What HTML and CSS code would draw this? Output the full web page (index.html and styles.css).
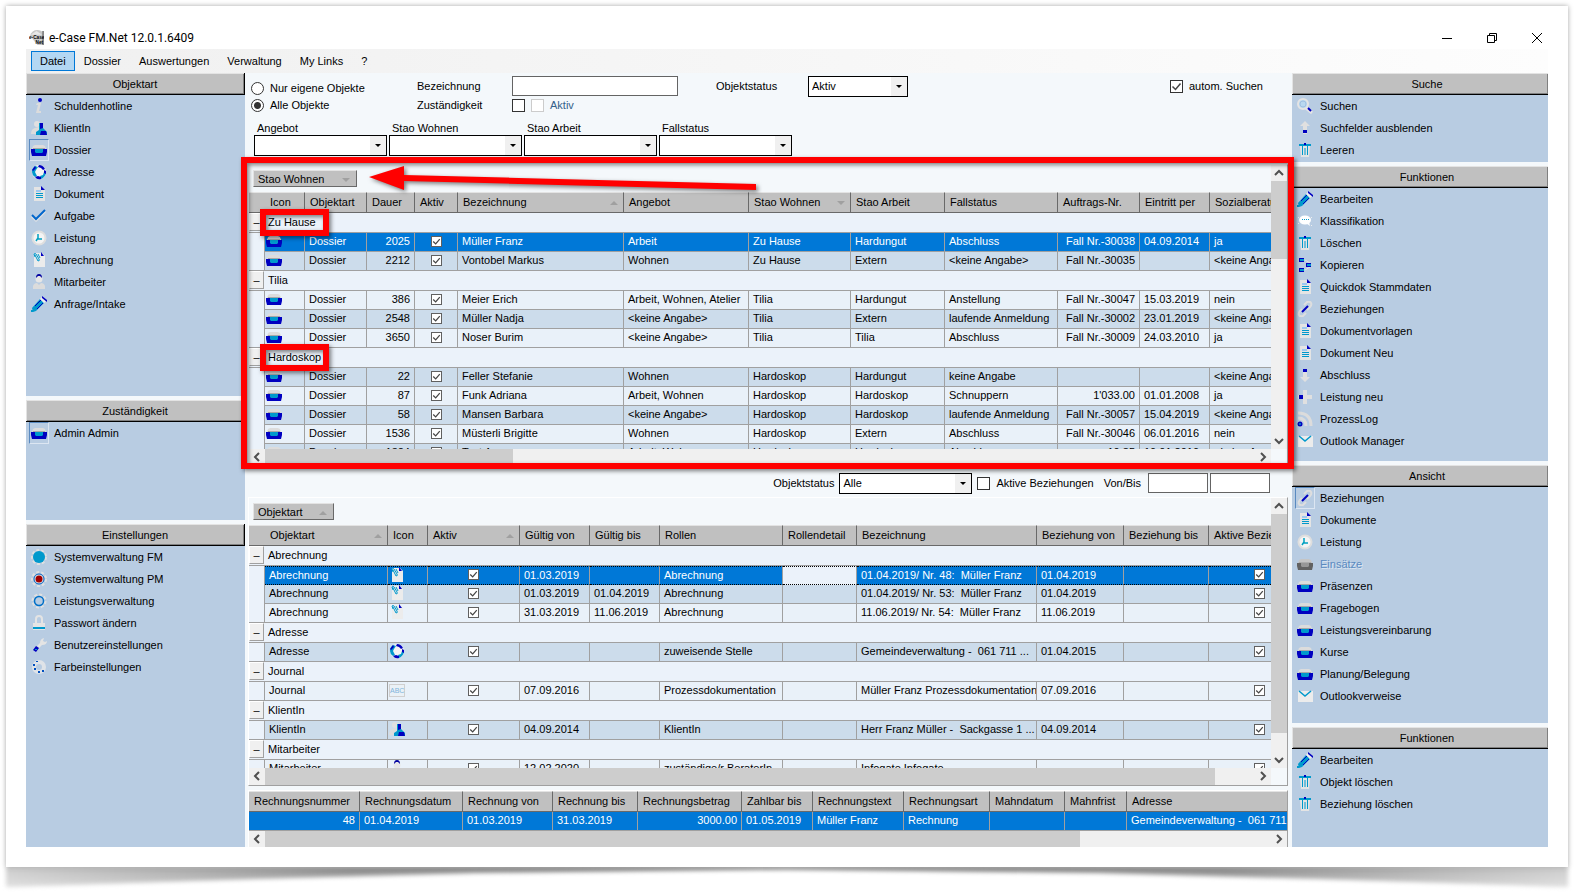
FILE: index.html
```html
<!DOCTYPE html>
<html lang="de">

<head>
	<meta charset="UTF-8">
	<meta name="viewport" content="width=device-width, initial-scale=1.0">
	<title>e-Case FM.Net 12.0.1.6409</title>
	<link rel="stylesheet" href="styles.css">
</head>

<body>

	<svg class="sprite" aria-hidden="true">
		<symbol id="i-info" viewBox="0 0 16 16"><circle cx="9" cy="2" r="2" fill="#0000c0"/><path d="M6 5h4l-2 8h2v2H5l2-8H5z" fill="#dcdcdc"/></symbol>
		<symbol id="i-client" viewBox="0 0 16 16"><circle cx="6" cy="4" r="3" fill="#e0e0e0"/><path d="M0 14q0-5 4-6l4-1v7z" fill="#dcdcdc"/><path d="M8 3h4v5l4 4v3H5v-3l3-2z" fill="#0099cc"/><path d="M9 3h3v5l-3 1zM10 11h5l1 4h-7z" fill="#0000c0"/></symbol>
		<symbol id="i-box" viewBox="0 0 16 16"><path d="M1 7l1-3 2-1h8l2 1 1 3z" fill="#dcdcdc"/><path d="M2 6h12v1H2z" fill="#a8a8a8"/><path d="M0 7h16v3l-1 4H1l-1-4z" fill="#0000c0"/><path d="M4 7h8v3l-1 1H5l-1-1z" fill="#0099cc"/></symbol>
		<symbol id="i-globe" viewBox="0 0 16 16"><circle cx="8" cy="8" r="7" fill="#f4f4f4"/><path d="M1 8q0-4 3-6l3 1-2 3-1 2 2 4-2 1q-3-2-3-5zM9 12l3-1 1-3 2 1q-1 4-5 6z" fill="#0099cc"/><path d="M8 1q4 0 6 4l-2 1-2-2-3-1zM13 6l2 1v3l-2-1zM4 13l3-1 3 1v2q-4 1-6-2zM1 6l3-4 1 2-3 3z" fill="#0000c0"/></symbol>
		<symbol id="i-doc" viewBox="0 0 16 16"><path d="M3 1h7l4 3v11H3z" fill="#e4e4e4"/><path d="M10 0l4 4h-4z" fill="#0000c0"/><path d="M5 4h5v2H5z" fill="#9cc8f0"/><path d="M5 7h7v1H5zM5 9h7v1H5zM5 11h7v1H5z" fill="#0099cc"/></symbol>
		<symbol id="i-check" viewBox="0 0 16 16"><path d="M1 8l4 4L14 3" fill="none" stroke="#e4e4e4" stroke-width="3"/><path d="M1 7l4 4L14 2" fill="none" stroke="#0066cc" stroke-width="2"/></symbol>
		<symbol id="i-clock" viewBox="0 0 16 16"><circle cx="8" cy="8" r="7.5" fill="#dedede"/><circle cx="8" cy="8" r="5.5" fill="#f4f4f4"/><path d="M7 4v5h4M7 8l-2 3" fill="none" stroke="#00a0c0" stroke-width="1.5"/></symbol>
		<symbol id="i-clip" viewBox="0 0 16 16"><path d="M3 1h8l3 3v11H3z" fill="#ececec"/><path d="M10 0l3 4h-3z" fill="#0000c0"/><path d="M4 3l3 6q2 0 1-2L5 2q-1-1-2 0l1 3M7 2l2 4" fill="none" stroke="#0099cc"/></symbol>
		<symbol id="i-staff" viewBox="0 0 16 16"><circle cx="8" cy="5" r="3.5" fill="#e6e6e6"/><path d="M5 4q0-4 3-4t3 4L9 2H7z" fill="#0000a0"/><path d="M2 15v-3q1-3 4-3l2 2 2-2q3 0 4 3v3z" fill="#dcdcdc"/></symbol>
		<symbol id="i-pencil" viewBox="0 0 16 16"><path d="M1 12l8-9 4 4-8 8-3 1z" fill="#0099cc"/><path d="M4 10l6-6M6 13l6-6" stroke="#0000c0" fill="none"/><path d="M9 3l2-2 4 4-2 2z" fill="#eee"/><path d="M11 0l5 4v2l-5-4z" fill="#0000c0"/><path d="M0 14h2v2H0z" fill="#0099cc"/></symbol>
		<symbol id="i-search" viewBox="0 0 16 16"><circle cx="6" cy="6" r="5" fill="#b8d8f0" stroke="#e4e4e4" stroke-width="2"/><circle cx="6" cy="6" r="3" fill="none" stroke="#a0c0e0"/><path d="M9 10l6 5" stroke="#e4e4e4" stroke-width="3"/><path d="M11 10l3 3" stroke="#0000c0" stroke-width="2"/></symbol>
		<symbol id="i-up" viewBox="0 0 16 16"><path d="M8 1l5 5h-3v8H6V6H3z" fill="#e0e0e0"/><path d="M6 10h4v3H6z" fill="#0000c0"/></symbol>
		<symbol id="i-down" viewBox="0 0 16 16"><path d="M8 15l5-5h-3V2H6v8H3z" fill="#e0e0e0"/><path d="M6 2h4v3H6z" fill="#0000c0"/></symbol>
		<symbol id="i-trash" viewBox="0 0 16 16"><path d="M3 4h10l-1 11H4z" fill="#e4e4e4"/><path d="M2 2h12v2H2z" fill="#0099cc"/><path d="M7 1h2v2H7z" fill="#0000c0"/><path d="M5.500 4v9M8 6v7M10.500 4v9" stroke="#0099cc" fill="none"/></symbol>
		<symbol id="i-chat" viewBox="0 0 16 16"><ellipse cx="8" cy="7" rx="6" ry="4.5" fill="#fff"/><path d="M9 10l4 3-1-4z" fill="#fff"/><path d="M5 6h1v1H5zM7 6h1v1H7zM9 6h1v1H9zM11 6h1v1h-1z" fill="#0099cc"/><path d="M1 4h1v1H1zM14 4h1v1h-1zM1 10h1v1H1zM14 12h1v1h-1z" fill="#eee"/></symbol>
		<symbol id="i-copy" viewBox="0 0 16 16"><path d="M8 3l5 3v4l-5 3" fill="none" stroke="#e0e0e0"/><path d="M2 1h5v4H2zM9 6h5v4H9zM2 11h5v4H2z" fill="#0000c0"/><path d="M3 2h4v2H3zM10 7h4v2h-4zM3 12h4v2H3z" fill="#0099cc"/></symbol>
		<symbol id="i-link" viewBox="0 0 16 16"><path d="M7 4l3-3q3-1 4 1t-1 4l-3 3M9 12l-3 3q-3 1-4-1t1-4l2-2" fill="none" stroke="#dedede" stroke-width="2"/><path d="M5 11l6-6" stroke="#0000c0" stroke-width="2"/></symbol>
		<symbol id="i-plus" viewBox="0 0 16 16"><path d="M6 1h4v5h5v4h-5v5H6v-5H1V6h5z" fill="#e0e0e0"/><path d="M2 6h4v4H2z" fill="#0000c0"/></symbol>
		<symbol id="i-rss" viewBox="0 0 16 16"><path d="M1 2q13 0 13 13M1 7q8 0 8 8" fill="none" stroke="#dcdcdc" stroke-width="3"/><circle cx="3" cy="13" r="2.500" fill="#0000c0"/><circle cx="3" cy="13" r="1" fill="#0099cc"/></symbol>
		<symbol id="i-mail" viewBox="0 0 16 16"><path d="M1 3h15v11H1z" fill="#ececec"/><path d="M2 3l6 5 6-5" fill="none" stroke="#0099cc" stroke-width="1.500"/></symbol>
		<symbol id="i-gear" viewBox="0 0 16 16"><circle cx="8" cy="8" r="7" fill="none" stroke="#e0e0e0" stroke-width="2" stroke-dasharray="3 2"/><circle cx="8" cy="8" r="6" fill="#0099cc"/></symbol>
		<symbol id="i-gear-red" viewBox="0 0 16 16"><circle cx="8" cy="8" r="7" fill="none" stroke="#e0e0e0" stroke-width="2" stroke-dasharray="3 2"/><circle cx="8" cy="8" r="5" fill="#e8e8e8" stroke="#0060c0"/><circle cx="8" cy="8" r="3.500" fill="#a00000"/></symbol>
		<symbol id="i-gear-ring" viewBox="0 0 16 16"><circle cx="8" cy="8" r="6.500" fill="none" stroke="#e0e0e0" stroke-width="2" stroke-dasharray="3 2"/><circle cx="8" cy="8" r="4.500" fill="#b8cce2" stroke="#0070c8" stroke-width="1.500"/></symbol>
		<symbol id="i-lock" viewBox="0 0 16 16"><path d="M5 8V4q0-3 3-3t3 3v4" fill="none" stroke="#e4e4e4" stroke-width="2"/><path d="M2 8h12v7H2z" fill="#e4e4e4"/><path d="M2 12h12v2H2z" fill="#0099cc"/></symbol>
		<symbol id="i-wrench" viewBox="0 0 16 16"><path d="M6 9l3-3q0-4 4-5l-1 3 2 1 2-1q0 4-5 4l-3 3z" fill="#e4e4e4"/><path d="M2 13l3-4 3 2-3 4z" fill="#0000c0"/><path d="M4 12h2v1H4z" fill="#0099cc"/></symbol>
		<symbol id="i-dots" viewBox="0 0 16 16"><circle cx="8" cy="8" r="7" fill="#dfe3e8"/><circle cx="8" cy="8" r="3" fill="#b8cce2"/><path d="M2 5h2v2H2zM3 9h2v2H3zM7 12h2v2H7zM11 11h2v2h-2zM5 2h2v1H5z" fill="#0050c0"/></symbol>
		<symbol id="i-left" viewBox="0 0 16 16"><path d="M10 4L6 8l4 4" fill="none" stroke="#505050" stroke-width="2"/></symbol>
		<symbol id="i-right" viewBox="0 0 16 16"><path d="M6 4l4 4-4 4" fill="none" stroke="#505050" stroke-width="2"/></symbol>
		<symbol id="i-top" viewBox="0 0 16 16"><path d="M4 10l4-4 4 4" fill="none" stroke="#505050" stroke-width="2"/></symbol>
		<symbol id="i-bottom" viewBox="0 0 16 16"><path d="M4 6l4 4 4-4" fill="none" stroke="#505050" stroke-width="2"/></symbol>
	</svg>

	<div class="sheet">
		<div class="shadow"></div>
		<div class="app">

			<header class="titlebar">
				<svg class="logo" viewBox="0 0 16 16" aria-hidden="true"><path d="M1 6q2-6 8-6 4 0 6 3v13H9" fill="#c8c8c8"/><path d="M2 5l6-4 6 4z" fill="#e8e8e8"/><path d="M14 1h2v15h-2z" fill="#888"/><text x="0" y="10" font-size="5" font-weight="bold" font-family="Liberation Sans, sans-serif">e-Case</text><text x="7" y="15" font-size="5" font-weight="bold" font-family="Liberation Sans, sans-serif">Net</text></svg>
				<h1>e-Case FM.Net 12.0.1.6409</h1>
				<div class="window-buttons">
					<button type="button" aria-label="Minimieren"><svg viewBox="0 0 12 12"><path d="M1 6.500h10"/></svg></button>
					<button type="button" aria-label="Wiederherstellen"><svg viewBox="0 0 12 12"><path d="M1.500 3.500h7v7h-7zM3.500 3.500v-2h7v7h-2"/></svg></button>
					<button type="button" aria-label="Schliessen"><svg viewBox="0 0 12 12"><path d="M1 1l10 10M11 1L1 11"/></svg></button>
				</div>
			</header>

			<nav class="menu">
				<button type="button" class="active">Datei</button>
				<button type="button">Dossier</button>
				<button type="button">Auswertungen</button>
				<button type="button">Verwaltung</button>
				<button type="button">My Links</button>
				<button type="button">?</button>
			</nav>

			<div class="columns">

				<aside class="sidebar left">
					<section class="panel tall">
						<h2>Objektart</h2>
						<button type="button"><svg><use href="#i-info"/></svg>Schuldenhotline</button>
						<button type="button"><svg><use href="#i-client"/></svg>KlientIn</button>
						<button type="button" class="pressed"><svg><use href="#i-box"/></svg>Dossier</button>
						<button type="button"><svg><use href="#i-globe"/></svg>Adresse</button>
						<button type="button"><svg><use href="#i-doc"/></svg>Dokument</button>
						<button type="button"><svg><use href="#i-check"/></svg>Aufgabe</button>
						<button type="button"><svg><use href="#i-clock"/></svg>Leistung</button>
						<button type="button"><svg><use href="#i-clip"/></svg>Abrechnung</button>
						<button type="button"><svg><use href="#i-staff"/></svg>Mitarbeiter</button>
						<button type="button"><svg><use href="#i-pencil"/></svg>Anfrage/Intake</button>
					</section>
					<section class="panel short">
						<h2>Zuständigkeit</h2>
						<button type="button" class="pressed"><svg><use href="#i-box"/></svg>Admin Admin</button>
					</section>
					<section class="panel tall">
						<h2>Einstellungen</h2>
						<button type="button"><svg><use href="#i-gear"/></svg>Systemverwaltung FM</button>
						<button type="button"><svg><use href="#i-gear-red"/></svg>Systemverwaltung PM</button>
						<button type="button"><svg><use href="#i-gear-ring"/></svg>Leistungsverwaltung</button>
						<button type="button"><svg><use href="#i-lock"/></svg>Passwort ändern</button>
						<button type="button"><svg><use href="#i-wrench"/></svg>Benutzereinstellungen</button>
						<button type="button"><svg><use href="#i-dots"/></svg>Farbeinstellungen</button>
					</section>
				</aside>

				<main class="main">

					<form class="filters">
						<div class="filter-grid">
							<label class="option low"><input type="radio" name="scope">Nur eigene Objekte</label>
							<label for="bezeichnung">Bezeichnung</label>
							<input type="text" id="bezeichnung" class="text">
							<label for="status">Objektstatus</label>
							<select id="status" class="status"><option>Aktiv</option></select>
							<label class="option"><input type="checkbox" checked>autom. Suchen</label>

							<label class="option"><input type="radio" name="scope" checked>Alle Objekte</label>
							<label for="zustaendig">Zuständigkeit</label>
							<div class="option">
								<input type="checkbox" id="zustaendig">
								<label class="option disabled"><input type="checkbox" disabled>Aktiv</label>
							</div>
						</div>
						<div class="dropdowns">
							<label>Angebot<select><option></option></select></label>
							<label>Stao Wohnen<select><option></option></select></label>
							<label>Stao Arbeit<select><option></option></select></label>
							<label>Fallstatus<select><option></option></select></label>
						</div>
					</form>

					<div class="grid-pane upper">
						<div class="viewport">
							<div class="group-bar"><button type="button" class="chip">Stao Wohnen<i class="sort desc"></i></button></div>
							<table class="dossiers">
								<colgroup>
									<col class="w16"><col class="w40"><col class="w62"><col class="w48"><col class="w43"><col class="w166"><col class="w125"><col class="w102"><col class="w94"><col class="w113"><col class="w82"><col class="w70"><col class="w90">
								</colgroup>
								<thead>
									<tr><th class="indent"></th><th>Icon</th><th>Objektart</th><th>Dauer</th><th>Aktiv</th><th>Bezeichnung<i class="sort asc"></i></th><th>Angebot</th><th>Stao Wohnen<i class="sort desc"></i></th><th>Stao Arbeit</th><th>Fallstatus</th><th>Auftrags-Nr.</th><th>Eintritt per</th><th>Sozialberatung</th></tr>
								</thead>
								<tbody>
									<tr class="group"><td colspan="13"><div><button type="button" aria-label="Gruppe schliessen">–</button><span class="marked">Zu Hause</span></div></td></tr>
									<tr class="selected"><td class="indent"></td><td class="icon"><svg><use href="#i-box"/></svg></td><td>Dossier</td><td class="num">2025</td><td class="tick"><input type="checkbox" aria-label="Aktiv" checked></td><td>Müller Franz</td><td>Arbeit</td><td>Zu Hause</td><td>Hardungut</td><td>Abschluss</td><td class="num">Fall Nr.-30038</td><td>04.09.2014</td><td>ja</td></tr>
									<tr class="alt"><td class="indent"></td><td class="icon"><svg><use href="#i-box"/></svg></td><td>Dossier</td><td class="num">2212</td><td class="tick"><input type="checkbox" aria-label="Aktiv" checked></td><td>Vontobel Markus</td><td>Wohnen</td><td>Zu Hause</td><td>Extern</td><td>&lt;keine Angabe&gt;</td><td class="num">Fall Nr.-30035</td><td></td><td>&lt;keine Angabe&gt;</td></tr>
								</tbody>
								<tbody>
									<tr class="group"><td colspan="13"><div><button type="button" aria-label="Gruppe schliessen">–</button><span>Tilia</span></div></td></tr>
									<tr><td class="indent"></td><td class="icon"><svg><use href="#i-box"/></svg></td><td>Dossier</td><td class="num">386</td><td class="tick"><input type="checkbox" aria-label="Aktiv" checked></td><td>Meier Erich</td><td>Arbeit, Wohnen, Atelier</td><td>Tilia</td><td>Hardungut</td><td>Anstellung</td><td class="num">Fall Nr.-30047</td><td>15.03.2019</td><td>nein</td></tr>
									<tr class="alt"><td class="indent"></td><td class="icon"><svg><use href="#i-box"/></svg></td><td>Dossier</td><td class="num">2548</td><td class="tick"><input type="checkbox" aria-label="Aktiv" checked></td><td>Müller Nadja</td><td>&lt;keine Angabe&gt;</td><td>Tilia</td><td>Extern</td><td>laufende Anmeldung</td><td class="num">Fall Nr.-30002</td><td>23.01.2019</td><td>&lt;keine Angabe&gt;</td></tr>
									<tr><td class="indent"></td><td class="icon"><svg><use href="#i-box"/></svg></td><td>Dossier</td><td class="num">3650</td><td class="tick"><input type="checkbox" aria-label="Aktiv" checked></td><td>Noser Burim</td><td>&lt;keine Angabe&gt;</td><td>Tilia</td><td>Tilia</td><td>Abschluss</td><td class="num">Fall Nr.-30009</td><td>24.03.2010</td><td>ja</td></tr>
								</tbody>
								<tbody>
									<tr class="group"><td colspan="13"><div><button type="button" aria-label="Gruppe schliessen">–</button><span class="marked">Hardoskop</span></div></td></tr>
									<tr class="alt"><td class="indent"></td><td class="icon"><svg><use href="#i-box"/></svg></td><td>Dossier</td><td class="num">22</td><td class="tick"><input type="checkbox" aria-label="Aktiv" checked></td><td>Feller Stefanie</td><td>Wohnen</td><td>Hardoskop</td><td>Hardungut</td><td>keine Angabe</td><td></td><td></td><td>&lt;keine Angabe&gt;</td></tr>
									<tr><td class="indent"></td><td class="icon"><svg><use href="#i-box"/></svg></td><td>Dossier</td><td class="num">87</td><td class="tick"><input type="checkbox" aria-label="Aktiv" checked></td><td>Funk Adriana</td><td>Arbeit, Wohnen</td><td>Hardoskop</td><td>Hardoskop</td><td>Schnuppern</td><td class="num">1'033.00</td><td>01.01.2008</td><td>ja</td></tr>
									<tr class="alt"><td class="indent"></td><td class="icon"><svg><use href="#i-box"/></svg></td><td>Dossier</td><td class="num">58</td><td class="tick"><input type="checkbox" aria-label="Aktiv" checked></td><td>Mansen Barbara</td><td>&lt;keine Angabe&gt;</td><td>Hardoskop</td><td>Hardoskop</td><td>laufende Anmeldung</td><td class="num">Fall Nr.-30057</td><td>15.04.2019</td><td>&lt;keine Angabe&gt;</td></tr>
									<tr><td class="indent"></td><td class="icon"><svg><use href="#i-box"/></svg></td><td>Dossier</td><td class="num">1536</td><td class="tick"><input type="checkbox" aria-label="Aktiv" checked></td><td>Müsterli Brigitte</td><td>Wohnen</td><td>Hardoskop</td><td>Extern</td><td>Abschluss</td><td class="num">Fall Nr.-30046</td><td>06.01.2016</td><td>nein</td></tr>
									<tr class="alt"><td class="indent"></td><td class="icon"><svg><use href="#i-box"/></svg></td><td>Dossier</td><td class="num">1324</td><td class="tick"><input type="checkbox" aria-label="Aktiv" checked></td><td>Test Anna</td><td>Arbeit, Wohnen</td><td>Hardoskop</td><td>Hardoskop</td><td>Abschluss</td><td class="num">10.85</td><td>10.01.2010</td><td>&lt;keine Angabe&gt;</td></tr>
								</tbody>
							</table>
						</div>
						<div class="vscroll"><svg><use href="#i-top"/></svg><div class="track"><div class="thumb" style="height: 31%"></div></div><svg><use href="#i-bottom"/></svg></div>
						<div class="hscroll"><svg><use href="#i-left"/></svg><div class="track"><div class="thumb" style="width: 25%"></div></div><svg><use href="#i-right"/></svg></div>
						<div class="highlight"></div>
						<svg class="arrow" viewBox="0 0 392 28" aria-hidden="true"><path d="M0 12L35 1v9l352 9v6L35 16v9z" fill="#f00"/></svg>
					</div>

					<form class="relation-filters">
						<label for="rel-status">Objektstatus</label>
						<select id="rel-status"><option>Alle</option></select>
						<label class="option"><input type="checkbox">Aktive Beziehungen</label>
						<label for="von" class="range">Von/Bis</label>
						<input type="text" id="von" class="date">
						<input type="text" class="date" aria-label="Bis">
					</form>

					<div class="grid-pane lower">
						<div class="viewport">
							<div class="group-bar"><button type="button" class="chip narrow">Objektart<i class="sort asc"></i></button></div>
							<table class="relations">
								<colgroup>
									<col class="w16"><col class="w123"><col class="w40"><col class="w92"><col class="w70"><col class="w70"><col class="w123"><col class="w74"><col class="w180"><col class="w87"><col class="w85"><col class="w102">
								</colgroup>
								<thead>
									<tr><th class="indent"></th><th>Objektart<i class="sort asc"></i></th><th>Icon</th><th>Aktiv<i class="sort asc"></i></th><th>Gültig von</th><th>Gültig bis</th><th>Rollen</th><th>Rollendetail</th><th>Bezeichnung</th><th>Beziehung von</th><th>Beziehung bis</th><th>Aktive Beziehung</th></tr>
								</thead>
								<tbody>
									<tr class="group"><td colspan="12"><div><button type="button" aria-label="Gruppe schliessen">–</button><span>Abrechnung</span></div></td></tr>
									<tr class="selected current"><td class="indent"></td><td>Abrechnung</td><td class="icon"><svg><use href="#i-clip"/></svg></td><td class="tick"><input type="checkbox" aria-label="Aktiv" checked></td><td>01.03.2019</td><td></td><td>Abrechnung</td><td class="cursor"></td><td>01.04.2019/ Nr. 48:&nbsp; Müller Franz</td><td>01.04.2019</td><td></td><td class="tick"><input type="checkbox" aria-label="Aktive Beziehung" checked></td></tr>
									<tr class="alt"><td class="indent"></td><td>Abrechnung</td><td class="icon"><svg><use href="#i-clip"/></svg></td><td class="tick"><input type="checkbox" aria-label="Aktiv" checked></td><td>01.03.2019</td><td>01.04.2019</td><td>Abrechnung</td><td></td><td>01.04.2019/ Nr. 53:&nbsp; Müller Franz</td><td>01.04.2019</td><td></td><td class="tick"><input type="checkbox" aria-label="Aktive Beziehung" checked></td></tr>
									<tr><td class="indent"></td><td>Abrechnung</td><td class="icon"><svg><use href="#i-clip"/></svg></td><td class="tick"><input type="checkbox" aria-label="Aktiv" checked></td><td>31.03.2019</td><td>11.06.2019</td><td>Abrechnung</td><td></td><td>11.06.2019/ Nr. 54:&nbsp; Müller Franz</td><td>11.06.2019</td><td></td><td class="tick"><input type="checkbox" aria-label="Aktive Beziehung" checked></td></tr>
								</tbody>
								<tbody>
									<tr class="group"><td colspan="12"><div><button type="button" aria-label="Gruppe schliessen">–</button><span>Adresse</span></div></td></tr>
									<tr class="alt"><td class="indent"></td><td>Adresse</td><td class="icon"><svg><use href="#i-globe"/></svg></td><td class="tick"><input type="checkbox" aria-label="Aktiv" checked></td><td></td><td></td><td>zuweisende Stelle</td><td></td><td>Gemeindeverwaltung -&nbsp; 061 711 ...</td><td>01.04.2015</td><td></td><td class="tick"><input type="checkbox" aria-label="Aktive Beziehung" checked></td></tr>
								</tbody>
								<tbody>
									<tr class="group"><td colspan="12"><div><button type="button" aria-label="Gruppe schliessen">–</button><span>Journal</span></div></td></tr>
									<tr><td class="indent"></td><td>Journal</td><td class="icon"><span class="abc">ABC</span></td><td class="tick"><input type="checkbox" aria-label="Aktiv" checked></td><td>07.09.2016</td><td></td><td>Prozessdokumentation</td><td></td><td>Müller Franz Prozessdokumentation</td><td>07.09.2016</td><td></td><td class="tick"><input type="checkbox" aria-label="Aktive Beziehung" checked></td></tr>
								</tbody>
								<tbody>
									<tr class="group"><td colspan="12"><div><button type="button" aria-label="Gruppe schliessen">–</button><span>KlientIn</span></div></td></tr>
									<tr class="alt"><td class="indent"></td><td>KlientIn</td><td class="icon"><svg><use href="#i-client"/></svg></td><td class="tick"><input type="checkbox" aria-label="Aktiv" checked></td><td>04.09.2014</td><td></td><td>KlientIn</td><td></td><td>Herr Franz Müller -&nbsp; Sackgasse 1 ...</td><td>04.09.2014</td><td></td><td class="tick"><input type="checkbox" aria-label="Aktive Beziehung" checked></td></tr>
								</tbody>
								<tbody>
									<tr class="group"><td colspan="12"><div><button type="button" aria-label="Gruppe schliessen">–</button><span>Mitarbeiter</span></div></td></tr>
									<tr><td class="indent"></td><td>Mitarbeiter</td><td class="icon"><svg><use href="#i-staff"/></svg></td><td class="tick"><input type="checkbox" aria-label="Aktiv" checked></td><td>12.02.2020</td><td></td><td>zuständige/r BeraterIn</td><td></td><td>Infogate Infogate</td><td></td><td></td><td class="tick"><input type="checkbox" aria-label="Aktive Beziehung" checked></td></tr>
								</tbody>
							</table>
						</div>
						<div class="vscroll"><svg><use href="#i-top"/></svg><div class="track"><div class="thumb" style="height: 92%"></div></div><svg><use href="#i-bottom"/></svg></div>
						<div class="hscroll"><svg><use href="#i-left"/></svg><div class="track"><div class="thumb" style="width: 96%"></div></div><svg><use href="#i-right"/></svg></div>
					</div>

					<div class="grid-pane invoices">
						<div class="viewport">
							<table>
								<colgroup>
									<col class="w111"><col class="w103"><col class="w90"><col class="w85"><col class="w104"><col class="w71"><col class="w91"><col class="w86"><col class="w75"><col class="w62"><col class="w180">
								</colgroup>
								<thead>
									<tr><th>Rechnungsnummer</th><th>Rechnungsdatum</th><th>Rechnung von</th><th>Rechnung bis</th><th>Rechnungsbetrag</th><th>Zahlbar bis</th><th>Rechnungstext</th><th>Rechnungsart</th><th>Mahndatum</th><th>Mahnfrist</th><th>Adresse</th></tr>
								</thead>
								<tbody>
									<tr class="selected"><td class="num">48</td><td>01.04.2019</td><td>01.03.2019</td><td>31.03.2019</td><td class="num">3000.00</td><td>01.05.2019</td><td>Müller Franz</td><td>Rechnung</td><td></td><td></td><td>Gemeindeverwaltung -&nbsp; 061 711 77</td></tr>
								</tbody>
							</table>
						</div>
						<div class="hscroll"><svg><use href="#i-left"/></svg><div class="track"><div class="thumb" style="width: 81%"></div></div><svg><use href="#i-right"/></svg></div>
					</div>

				</main>

				<aside class="sidebar right">
					<section class="panel search">
						<h2>Suche</h2>
						<button type="button"><svg><use href="#i-search"/></svg>Suchen</button>
						<button type="button"><svg><use href="#i-up"/></svg>Suchfelder ausblenden</button>
						<button type="button"><svg><use href="#i-trash"/></svg>Leeren</button>
					</section>
					<section class="panel functions">
						<h2>Funktionen</h2>
						<button type="button"><svg><use href="#i-pencil"/></svg>Bearbeiten</button>
						<button type="button"><svg><use href="#i-chat"/></svg>Klassifikation</button>
						<button type="button"><svg><use href="#i-trash"/></svg>Löschen</button>
						<button type="button"><svg><use href="#i-copy"/></svg>Kopieren</button>
						<button type="button"><svg><use href="#i-doc"/></svg>Quickdok Stammdaten</button>
						<button type="button"><svg><use href="#i-link"/></svg>Beziehungen</button>
						<button type="button"><svg><use href="#i-doc"/></svg>Dokumentvorlagen</button>
						<button type="button"><svg><use href="#i-doc"/></svg>Dokument Neu</button>
						<button type="button"><svg><use href="#i-down"/></svg>Abschluss</button>
						<button type="button"><svg><use href="#i-plus"/></svg>Leistung neu</button>
						<button type="button"><svg><use href="#i-rss"/></svg>ProzessLog</button>
						<button type="button"><svg><use href="#i-mail"/></svg>Outlook Manager</button>
					</section>
					<section class="panel views">
						<h2>Ansicht</h2>
						<button type="button" class="pressed"><svg><use href="#i-link"/></svg>Beziehungen</button>
						<button type="button"><svg><use href="#i-doc"/></svg>Dokumente</button>
						<button type="button"><svg><use href="#i-clock"/></svg>Leistung</button>
						<button type="button" disabled><svg><use href="#i-box"/></svg>Einsätze</button>
						<button type="button"><svg><use href="#i-box"/></svg>Präsenzen</button>
						<button type="button"><svg><use href="#i-box"/></svg>Fragebogen</button>
						<button type="button"><svg><use href="#i-box"/></svg>Leistungsvereinbarung</button>
						<button type="button"><svg><use href="#i-box"/></svg>Kurse</button>
						<button type="button"><svg><use href="#i-box"/></svg>Planung/Belegung</button>
						<button type="button"><svg><use href="#i-mail"/></svg>Outlookverweise</button>
					</section>
					<section class="panel rest">
						<h2>Funktionen</h2>
						<button type="button"><svg><use href="#i-pencil"/></svg>Bearbeiten</button>
						<button type="button"><svg><use href="#i-trash"/></svg>Objekt löschen</button>
						<button type="button"><svg><use href="#i-trash"/></svg>Beziehung löschen</button>
					</section>
				</aside>

			</div>
		</div>
	</div>

</body>

</html>
```

FILE: styles.css
```css
*,
*::before,
*::after {
	box-sizing: border-box;
}

body {
	margin: 0;
	padding: 6px 14px 29px 6px;
	height: 100vh;
	background-color: white;
	color: black;
	font-family: "Liberation Sans", Arial, sans-serif;
	font-size: 11px;
	line-height: 16px;
}

button,
input,
select {
	margin: 0;
	padding: 0;
	font: inherit;
	color: inherit;
}

h1,
h2 {
	margin: 0;
	font-size: inherit;
	font-weight: normal;
}

.sprite {
	position: absolute;
	width: 0;
	height: 0;
}

/* sheet of paper with curled shadow */

.sheet {
	position: relative;
	height: 100%;
	padding: 20px;
	background-color: white;
	box-shadow: 0 0 5px rgba(0, 0, 0, 0.35);
}

.shadow {
	position: absolute;
	z-index: -1;
	top: 100%;
	left: 0;
	right: 0;
	height: 20px;
	filter: blur(2px);
}

.shadow::before {
	content: "";
	display: block;
	height: 100%;
	background: linear-gradient(to bottom, transparent, rgba(255, 255, 255, 0.4)), linear-gradient(to right, #ccc, #888 22%, #777 50%, #888 78%, #ccc);
	clip-path: polygon(0 0, 100% 0, 100% 100%, 84% 60%, 70% 30%, 50% 12%, 30% 30%, 16% 60%, 0 100%);
}

.app {
	display: flex;
	flex-direction: column;
	height: 100%;
}

/* title bar and menu */

.titlebar {
	display: flex;
	align-items: center;
	gap: 5px;
	height: 23px;
	padding: 0 5px 0 3px;
	font-family: Roboto, sans-serif;
	font-size: 12px;
}

.logo {
	width: 15px;
	height: 15px;
}

.window-buttons {
	display: flex;
	gap: 33px;
	margin-left: auto;
}

.window-buttons button {
	width: 12px;
	height: 16px;
	border: 0;
	background: none;
}

.window-buttons svg {
	display: block;
	width: 12px;
	height: 12px;
	fill: none;
	stroke: black;
}

.menu {
	display: flex;
	height: 24px;
	padding: 2px 5px;
	background: linear-gradient(to right, #f0f0f0, #fdfdfd);
}

.menu button {
	padding: 0 8px;
	border: 1px solid transparent;
	background: none;
}

.menu .active {
	border-color: #0078d7;
	background-color: #b3d7f3;
}

.columns {
	flex: 1;
	display: flex;
	min-height: 0;
	background-color: #f4f8fb;
}

/* side panels */

.sidebar {
	display: flex;
	flex-direction: column;
	gap: 4px;
	flex: none;
}

.left {
	width: 219px;
}

.right {
	width: 256px;
}

.panel {
	display: flex;
	flex-direction: column;
	background-color: #b8cce2;
	overflow: hidden;
}

.tall {
	flex: 27 1 0;
}

.short {
	flex: 10 1 0;
}

.search {
	flex: none;
	padding-bottom: 1px;
}

.functions {
	flex: none;
	padding-bottom: 9px;
}

.views {
	flex: none;
	padding-bottom: 16px;
}

.rest {
	flex: 1;
}

.panel h2 {
	flex: none;
	height: 22px;
	line-height: 22px;
	text-align: center;
	background-color: #c0c0c0;
	border-bottom: 1px solid black;
	box-shadow: inset 1px 1px #e3e3e3, inset -1px -1px #808080;
}

.left h2 {
	border-right: 1px solid black;
}

.right h2 {
	padding-left: 14px;
}

.panel button {
	display: flex;
	align-items: center;
	gap: 5px;
	flex: none;
	height: 22px;
	padding: 0 3px;
	border: 0;
	background: none;
	line-height: 14px;
	text-align: left;
}

.panel svg {
	width: 20px;
	height: 22px;
	padding: 3px 2px;
}

.panel .pressed svg {
	border: 1px solid;
	border-color: #5a8ac0 #dce6f2 #dce6f2 #5a8ac0;
	padding: 2px 1px;
}

.panel button:disabled {
	color: #5a8ac0;
	text-shadow: 1px 1px #dce6f2;
}

.panel button:disabled svg {
	filter: grayscale(1) contrast(0.4) brightness(1.2);
}

/* filters */

.main {
	flex: 1;
	display: flex;
	flex-direction: column;
	min-width: 0;
	padding: 0 4px 0 3px;
}

.filters {
	flex: none;
	padding: 3px 0 8px 3px;
}

.filter-grid {
	display: grid;
	grid-template-columns: 166px 95px 204px 92px 1fr 118px;
	grid-template-rows: 20px 16px;
	row-gap: 1px;
	align-items: center;
}

.option {
	display: flex;
	align-items: center;
	gap: 6px;
}

.low {
	align-self: end;
}

.disabled {
	color: #33618a;
}

input[type="checkbox"],
input[type="radio"] {
	appearance: none;
	flex: none;
	width: 13px;
	height: 13px;
	border: 1px solid #333;
	background-color: white;
}

input[type="radio"] {
	border-radius: 50%;
}

input[type="radio"]:checked {
	background-image: radial-gradient(circle, #333 3px, transparent 4px);
}

input[type="checkbox"]:checked {
	background-image: url("data:image/svg+xml,%3Csvg xmlns='http://www.w3.org/2000/svg' viewBox='0 0 11 11'%3E%3Cpath d='M1.500 5.500l3 3 5-6' fill='none' stroke='%23444' stroke-width='1.500'/%3E%3C/svg%3E");
}

input[type="checkbox"]:disabled {
	border-color: #ccc;
}

.text,
.date {
	width: 166px;
	height: 20px;
	border: 1px solid #646464;
	background-color: white;
}

.date {
	width: 60px;
}

select {
	appearance: none;
	width: 133px;
	height: 21px;
	padding-left: 3px;
	border: 1px solid black;
	border-radius: 0;
	background: url("data:image/svg+xml,%3Csvg xmlns='http://www.w3.org/2000/svg' width='16' height='19'%3E%3Cpath d='M0 0h16v19H0z' fill='%23f0f0f0'/%3E%3Cpath d='M5 8h6l-3 3z'/%3E%3C/svg%3E") right center no-repeat white;
}

.status {
	width: 100px;
}

.dropdowns {
	display: flex;
	gap: 2px;
	margin-top: 9px;
	padding-left: 3px;
}

.dropdowns label {
	display: flex;
	flex-direction: column;
	line-height: 13px;
	text-indent: 3px;
}

/* data grids */

.grid-pane {
	position: relative;
	display: grid;
	grid-template: minmax(0, 1fr) 17px / minmax(0, 1fr) 16px;
	min-height: 0;
	border: 1px solid;
	border-color: white #a0a0a0 #a0a0a0 white;
}

.upper {
	flex: 303 1 0;
}

.lower {
	flex: 288 1 0;
}

.invoices {
	flex: none;
	grid-template: auto 16px / minmax(0, 1fr);
	margin-top: 4px;
	border-bottom: 0;
}

.viewport {
	overflow: hidden;
}

.group-bar {
	height: 27px;
	padding: 5px 4px;
}

.chip {
	display: flex;
	align-items: center;
	width: 104px;
	height: 17px;
	padding: 0 6px 0 4px;
	border: 1px solid;
	border-color: #e3e3e3 #696969 #696969 #e3e3e3;
	background-color: #c0c0c0;
}

.narrow {
	width: 81px;
}

.sort {
	float: right;
	margin: 8px 5px 0 0;
	border: 4px solid transparent;
}

.asc {
	border-top: 0;
	border-bottom-color: #a0a0a0;
}

.desc {
	border-bottom: 0;
	border-top-color: #a0a0a0;
}

.chip .sort {
	float: none;
	margin: 2px 0 0 auto;
}

table {
	width: 1px;
	table-layout: fixed;
	border-collapse: separate;
	border-spacing: 0;
	white-space: nowrap;
}

th {
	height: 21px;
	padding: 0 0 0 5px;
	font-weight: normal;
	text-align: left;
	line-height: 19px;
	overflow: hidden;
	background-color: #c0c0c0;
	border: 1px solid;
	border-color: #e3e3e3 #696969 #696969 #e3e3e3;
	border-left: 0;
}

td {
	height: 19px;
	padding: 0 4px;
	line-height: 16px;
	overflow: hidden;
	background-color: #e9f1f9;
	border-right: 1px solid #a0a0a0;
	border-bottom: 1px solid #a0a0a0;
	vertical-align: top;
}

th.indent {
	border-right: 0;
}

.alt td {
	background-color: #ccdceb;
}

.selected td {
	color: white;
	background-color: #0078d7;
}

.current td {
	border-top: 1px dotted black;
	border-bottom: 1px dotted black;
}

.selected .cursor {
	background-color: #ebf2fa;
}

tr td.indent {
	border-top: 0;
	border-bottom: 0;
	background-color: #ebf2fa;
}

tr:last-child td.indent {
	border-bottom: 1px solid #a0a0a0;
}

.num {
	text-align: right;
}

.icon {
	padding: 0 1px;
}

.icon svg {
	display: block;
	width: 16px;
	height: 16px;
}

.abc {
	display: block;
	width: 16px;
	height: 13px;
	margin-top: 2px;
	border: 1px solid #d0d0d0;
	background-color: #eaf1f6;
	color: #7fb4dc;
	font-size: 7px;
	line-height: 11px;
	text-align: center;
}

.tick {
	padding-top: 3px;
}

.current .tick {
	padding-top: 2px;
}

td input[type="checkbox"] {
	display: block;
	width: 11px;
	height: 11px;
	margin: 0 auto;
	border-color: #606060;
}

.group td {
	height: 20px;
	padding: 0;
	overflow: visible;
	background-color: #ebf2fa;
}

.group div {
	display: flex;
	gap: 2px;
	height: 19px;
}

.group button {
	width: 15px;
	height: 18px;
	border: 1px solid;
	border-color: white #a0a0a0 #a0a0a0 white;
	background-color: #f0f0f0;
	line-height: 15px;
}

.group span {
	padding: 0 2px;
	line-height: 19px;
}

/* red annotations */

.marked {
	position: relative;
	z-index: 1;
	width: 59px;
}

.marked::after {
	content: "";
	position: absolute;
	inset: -4px -4px -4px -6px;
	border: 6px solid red;
	filter: drop-shadow(2px 2px 2px rgba(0, 0, 0, 0.5));
}

.highlight {
	position: absolute;
	z-index: 2;
	inset: -8px -7px -3px -8px;
	border: 6px solid red;
	filter: drop-shadow(2px 2px 2px rgba(0, 0, 0, 0.5));
	pointer-events: none;
}

.arrow {
	position: absolute;
	z-index: 2;
	top: 0;
	left: 120px;
	width: 392px;
	height: 28px;
	overflow: visible;
	filter: drop-shadow(2px 2px 2px rgba(0, 0, 0, 0.5));
}

/* scroll bars */

.vscroll,
.hscroll {
	display: flex;
	background-color: #f0f0f0;
}

.vscroll {
	flex-direction: column;
}

.vscroll svg,
.hscroll svg {
	flex: none;
	width: 16px;
	height: 16px;
}

.track {
	flex: 1;
}

.thumb {
	width: 100%;
	height: 100%;
	background-color: #cdcdcd;
}

.relation-filters {
	display: flex;
	flex: none;
	justify-content: flex-end;
	align-items: center;
	height: 30px;
	padding: 2px 18px 0 0;
	gap: 5px;
}

.range {
	margin: 0 2px 0 5px;
}

.date + .date {
	margin-left: -3px;
}

/* column widths */

.w16 { width: 16px; }
.w40 { width: 40px; }
.w43 { width: 43px; }
.w48 { width: 48px; }
.w62 { width: 62px; }
.w70 { width: 70px; }
.w71 { width: 71px; }
.w74 { width: 74px; }
.w75 { width: 75px; }
.w82 { width: 82px; }
.w85 { width: 85px; }
.w86 { width: 86px; }
.w87 { width: 87px; }
.w90 { width: 90px; }
.w91 { width: 91px; }
.w92 { width: 92px; }
.w94 { width: 94px; }
.w102 { width: 102px; }
.w103 { width: 103px; }
.w104 { width: 104px; }
.w111 { width: 111px; }
.w113 { width: 113px; }
.w123 { width: 123px; }
.w125 { width: 125px; }
.w166 { width: 166px; }
.w180 { width: 180px; }
```
